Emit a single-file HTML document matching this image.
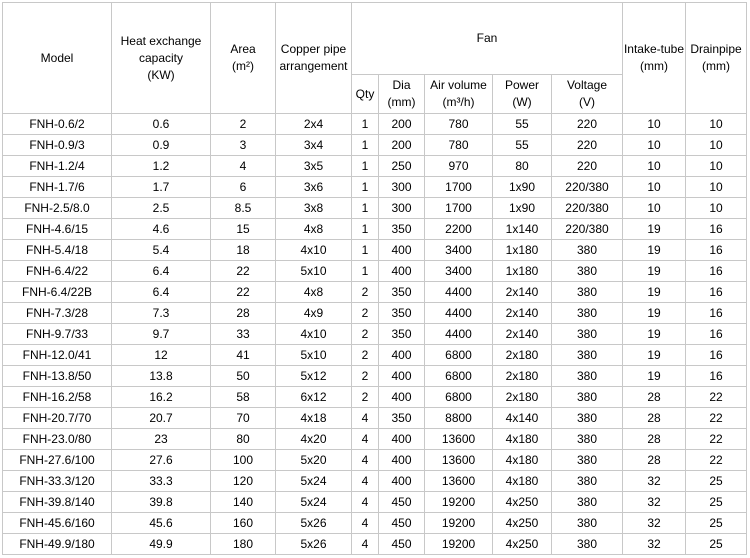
<!DOCTYPE html>
<html><head><meta charset="utf-8"><style>
html,body{margin:0;padding:0;background:#fff;width:750px;height:558px;overflow:hidden}
table{position:absolute;left:2px;top:2px;border-collapse:collapse;table-layout:fixed;font-family:"Liberation Sans",Arial,sans-serif;font-size:12px;color:#000}
td{border:1px solid #c8c8c8;text-align:center;vertical-align:middle;padding:0;height:21px;line-height:14px;white-space:nowrap;box-sizing:border-box}
.h td{line-height:17px;white-space:normal}
</style></head><body>
<table>
<colgroup><col style="width:109px"><col style="width:99px"><col style="width:65px"><col style="width:76px"><col style="width:27px"><col style="width:46px"><col style="width:68px"><col style="width:59px"><col style="width:71px"><col style="width:63px"><col style="width:61px"></colgroup>
<tr class="h" style="height:72px"><td rowspan="2">Model</td><td rowspan="2">Heat exchange<br>capacity<br>(KW)</td><td rowspan="2">Area<br>(m²)</td><td rowspan="2">Copper pipe<br>arrangement</td><td colspan="5" style="height:72px">Fan</td><td rowspan="2">Intake-tube<br>(mm)</td><td rowspan="2">Drainpipe<br>(mm)</td></tr>
<tr class="h" style="height:39px"><td style="height:39px">Qty</td><td>Dia<br>(mm)</td><td>Air volume<br>(m³/h)</td><td>Power<br>(W)</td><td>Voltage<br>(V)</td></tr>
<tr><td>FNH-0.6/2</td><td>0.6</td><td>2</td><td>2x4</td><td>1</td><td>200</td><td>780</td><td>55</td><td>220</td><td>10</td><td>10</td></tr>
<tr><td>FNH-0.9/3</td><td>0.9</td><td>3</td><td>3x4</td><td>1</td><td>200</td><td>780</td><td>55</td><td>220</td><td>10</td><td>10</td></tr>
<tr><td>FNH-1.2/4</td><td>1.2</td><td>4</td><td>3x5</td><td>1</td><td>250</td><td>970</td><td>80</td><td>220</td><td>10</td><td>10</td></tr>
<tr><td>FNH-1.7/6</td><td>1.7</td><td>6</td><td>3x6</td><td>1</td><td>300</td><td>1700</td><td>1x90</td><td>220/380</td><td>10</td><td>10</td></tr>
<tr><td>FNH-2.5/8.0</td><td>2.5</td><td>8.5</td><td>3x8</td><td>1</td><td>300</td><td>1700</td><td>1x90</td><td>220/380</td><td>10</td><td>10</td></tr>
<tr><td>FNH-4.6/15</td><td>4.6</td><td>15</td><td>4x8</td><td>1</td><td>350</td><td>2200</td><td>1x140</td><td>220/380</td><td>19</td><td>16</td></tr>
<tr><td>FNH-5.4/18</td><td>5.4</td><td>18</td><td>4x10</td><td>1</td><td>400</td><td>3400</td><td>1x180</td><td>380</td><td>19</td><td>16</td></tr>
<tr><td>FNH-6.4/22</td><td>6.4</td><td>22</td><td>5x10</td><td>1</td><td>400</td><td>3400</td><td>1x180</td><td>380</td><td>19</td><td>16</td></tr>
<tr><td>FNH-6.4/22B</td><td>6.4</td><td>22</td><td>4x8</td><td>2</td><td>350</td><td>4400</td><td>2x140</td><td>380</td><td>19</td><td>16</td></tr>
<tr><td>FNH-7.3/28</td><td>7.3</td><td>28</td><td>4x9</td><td>2</td><td>350</td><td>4400</td><td>2x140</td><td>380</td><td>19</td><td>16</td></tr>
<tr><td>FNH-9.7/33</td><td>9.7</td><td>33</td><td>4x10</td><td>2</td><td>350</td><td>4400</td><td>2x140</td><td>380</td><td>19</td><td>16</td></tr>
<tr><td>FNH-12.0/41</td><td>12</td><td>41</td><td>5x10</td><td>2</td><td>400</td><td>6800</td><td>2x180</td><td>380</td><td>19</td><td>16</td></tr>
<tr><td>FNH-13.8/50</td><td>13.8</td><td>50</td><td>5x12</td><td>2</td><td>400</td><td>6800</td><td>2x180</td><td>380</td><td>19</td><td>16</td></tr>
<tr><td>FNH-16.2/58</td><td>16.2</td><td>58</td><td>6x12</td><td>2</td><td>400</td><td>6800</td><td>2x180</td><td>380</td><td>28</td><td>22</td></tr>
<tr><td>FNH-20.7/70</td><td>20.7</td><td>70</td><td>4x18</td><td>4</td><td>350</td><td>8800</td><td>4x140</td><td>380</td><td>28</td><td>22</td></tr>
<tr><td>FNH-23.0/80</td><td>23</td><td>80</td><td>4x20</td><td>4</td><td>400</td><td>13600</td><td>4x180</td><td>380</td><td>28</td><td>22</td></tr>
<tr><td>FNH-27.6/100</td><td>27.6</td><td>100</td><td>5x20</td><td>4</td><td>400</td><td>13600</td><td>4x180</td><td>380</td><td>28</td><td>22</td></tr>
<tr><td>FNH-33.3/120</td><td>33.3</td><td>120</td><td>5x24</td><td>4</td><td>400</td><td>13600</td><td>4x180</td><td>380</td><td>32</td><td>25</td></tr>
<tr><td>FNH-39.8/140</td><td>39.8</td><td>140</td><td>5x24</td><td>4</td><td>450</td><td>19200</td><td>4x250</td><td>380</td><td>32</td><td>25</td></tr>
<tr><td>FNH-45.6/160</td><td>45.6</td><td>160</td><td>5x26</td><td>4</td><td>450</td><td>19200</td><td>4x250</td><td>380</td><td>32</td><td>25</td></tr>
<tr><td>FNH-49.9/180</td><td>49.9</td><td>180</td><td>5x26</td><td>4</td><td>450</td><td>19200</td><td>4x250</td><td>380</td><td>32</td><td>25</td></tr>
</table>
</body></html>
